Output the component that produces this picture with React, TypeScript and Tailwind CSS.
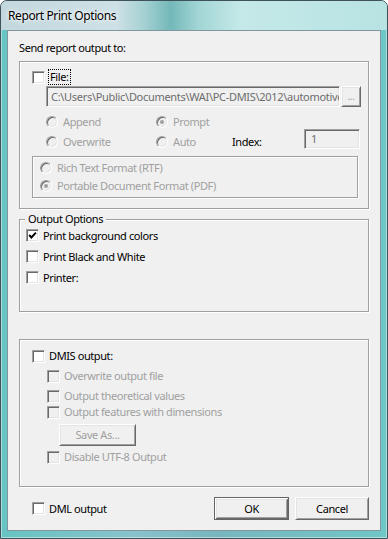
import React from 'react';

type BoxProps = { checked?: boolean; disabled?: boolean };

function CheckBox({ checked = false, disabled = false }: BoxProps) {
  return (
    <div
      className={`flex h-[13px] w-[13px] shrink-0 items-center justify-center border border-t-[#a0a0a0] border-l-[#a0a0a0] border-b-white border-r-white shadow-[inset_1px_1px_0_#696969,inset_-1px_-1px_0_#e3e3e3] ${disabled ? 'bg-[#f0f0f0]' : 'bg-white'}`}
    >
      {checked && (
        <svg width="9" height="9" viewBox="0 0 9 9">
          <path d="M1.2 4 L3.4 6.5 L7.9 1.6" fill="none" stroke="#000" strokeWidth="1.9" />
        </svg>
      )}
    </div>
  );
}

function Radio({ checked = false }: BoxProps) {
  return (
    <div className="flex h-[12px] w-[12px] shrink-0 items-center justify-center rounded-full border border-t-[#a0a0a0] border-l-[#a0a0a0] border-b-white border-r-white bg-[#f0f0f0] shadow-[inset_1px_1px_0_#696969,inset_-1px_-1px_0_#e3e3e3]">
      {checked && <div className="h-[4px] w-[4px] rounded-full bg-[#a0a0a0]" />}
    </div>
  );
}

function Button({ children, disabled = false, isDefault = false, className = '' }: { children: React.ReactNode; disabled?: boolean; isDefault?: boolean; className?: string }) {
  const edge = isDefault
    ? 'border border-[#646464] shadow-[inset_1px_1px_0_#fff,inset_-1px_-1px_0_#696969,inset_2px_2px_0_#e3e3e3,inset_-2px_-2px_0_#a0a0a0]'
    : 'border border-t-white border-l-white border-b-[#696969] border-r-[#696969] shadow-[inset_1px_1px_0_#e3e3e3,inset_-1px_-1px_0_#a0a0a0]';
  return (
    <div className={`flex shrink-0 items-center justify-center bg-[#f0f0f0] ${edge} ${disabled ? 'text-[#a0a0a0]' : 'text-black'} ${className}`}>
      {children}
    </div>
  );
}

const sunken = 'border border-t-[#a0a0a0] border-l-[#a0a0a0] border-b-white border-r-white shadow-[inset_1px_1px_0_#696969,inset_-1px_-1px_0_#e3e3e3]';
const etched = 'border border-[#a0a0a0] shadow-[1px_1px_0_#fff,inset_1px_1px_0_#fff]';

export default function App() {
  return (
    <div className="h-[539px] w-[388px] bg-white font-['Noto_Sans',sans-serif] text-[11px] leading-[16px] tracking-[-0.4px] text-black">
      <div className="flex h-[539px] w-[388px] flex-col overflow-hidden rounded-t-[7px] border border-[#3f5159] bg-[linear-gradient(90deg,#66c4c3_0%,#88c3cb_35%,#78b6c0_55%,#6fc7c6_100%)] shadow-[inset_0_0_0_1px_rgba(255,255,255,0.45)]">
        {/* Title bar */}
        <div className="flex h-[29px] shrink-0 items-center bg-[linear-gradient(90deg,#c3d8de_0%,#cde0e5_30%,#a5d1d3_37%,#74b8b9_44%,#a2d5d5_51%,#c5e8e8_62%,#b8e3e3_100%)] pl-[7px] text-[12px] [text-shadow:0_0_6px_#fff,0_0_3px_#fff]">
          Report Print Options
        </div>

        {/* Client area */}
        <div className="ml-[6px] flex h-[501px] w-[374px] flex-col border border-[#8296a0] bg-[#f0f0f0] px-[11px]">
          <div className="mt-[9px] flex h-[16px] items-center">Send report output to:</div>

          {/* Send report output to */}
          <div className={`mt-[5px] h-[148px] shrink-0 ${etched}`}>
            <div className="mt-[7px] flex h-[16px] items-center pl-[12px]">
              <CheckBox />
              <span className="ml-[3px] border border-dotted border-black px-[1px] leading-[14px]">File:</span>
            </div>
            <div className="mt-[1px] flex h-[21px] pl-[26px]">
              <div className={`flex w-[294px] items-center overflow-hidden whitespace-nowrap bg-[#f0f0f0] pl-[4px] tracking-[-0.3px] text-[#6d6d6d] ${sunken}`}>
                C:\Users\Public\Documents\WAI\PC-DMIS\2012\automotive
              </div>
              <Button disabled className="ml-[1px] w-[20px] pb-[2px] text-[10px]">...</Button>
            </div>
            <div className="mt-[5px] flex h-[20px] items-center pl-[26px] text-[#a0a0a0]">
              <div className="flex w-[110px] items-center">
                <Radio />
                <span className="ml-[5px]">Append</span>
              </div>
              <div className="flex items-center">
                <Radio checked />
                <span className="ml-[5px]">Prompt</span>
              </div>
            </div>
            <div className="flex h-[20px] items-center pl-[26px] text-[#a0a0a0]">
              <div className="flex w-[110px] items-center">
                <Radio />
                <span className="ml-[5px]">Overwrite</span>
              </div>
              <div className="flex w-[76px] items-center">
                <Radio />
                <span className="ml-[5px]">Auto</span>
              </div>
              <span className="w-[72px] text-black">Index:</span>
              <div className={`-mt-[3px] flex h-[20px] w-[56px] items-center self-start bg-[#f0f0f0] pl-[6px] text-[#6d6d6d] ${sunken}`}>1</div>
            </div>
            <div className={`ml-[12px] mt-[4px] h-[42px] w-[326px] pl-[7px] pt-[2px] text-[#a0a0a0] ${etched}`}>
              <div className="flex h-[18px] items-center">
                <Radio />
                <span className="ml-[5px]">Rich Text Format (RTF)</span>
              </div>
              <div className="flex h-[18px] items-center">
                <Radio checked />
                <span className="ml-[5px]">Portable Document Format (PDF)</span>
              </div>
            </div>
          </div>

          {/* Output Options */}
          <fieldset className={`mt-[2px] h-[101px] shrink-0 pl-[5px] ${etched}`}>
            <legend className="h-[16px] bg-[#f0f0f0] px-[3px] leading-[16px]">Output Options</legend>
            <div className="-mt-[2px] ml-[1px] flex h-[21px] items-center">
              <CheckBox checked />
              <span className="ml-[4px]">Print background colors</span>
            </div>
            <div className="ml-[1px] flex h-[21px] items-center">
              <CheckBox />
              <span className="ml-[4px]">Print Black and White</span>
            </div>
            <div className="ml-[1px] flex h-[21px] items-center">
              <CheckBox />
              <span className="ml-[4px]">Printer:</span>
            </div>
          </fieldset>

          {/* DMIS */}
          <div className={`mt-[27px] h-[148px] shrink-0 ${etched}`}>
            <div className="mt-[8px] flex h-[16px] items-center pl-[12px]">
              <CheckBox />
              <span className="ml-[4px]">DMIS output:</span>
            </div>
            <div className="mt-[4px] flex h-[16px] items-center pl-[27px] text-[#a0a0a0]">
              <CheckBox disabled />
              <span className="ml-[4px]">Overwrite output file</span>
            </div>
            <div className="mt-[4px] flex h-[16px] items-center pl-[27px] text-[#a0a0a0]">
              <CheckBox disabled />
              <span className="ml-[4px]">Output theoretical values</span>
            </div>
            <div className="flex h-[16px] items-center pl-[27px] text-[#a0a0a0]">
              <CheckBox disabled />
              <span className="ml-[4px]">Output features with dimensions</span>
            </div>
            <div className="mt-[4px] flex pl-[39px]">
              <Button disabled className="h-[22px] w-[77px]">Save As...</Button>
            </div>
            <div className="mt-[3px] flex h-[16px] items-center pl-[27px] text-[#a0a0a0]">
              <CheckBox disabled />
              <span className="ml-[4px]">Disable UTF-8 Output</span>
            </div>
          </div>

          {/* Bottom row */}
          <div className="mt-[10px] flex h-[23px] items-center">
            <div className="ml-[13px]">
              <CheckBox />
            </div>
            <span className="ml-[4px]">DML output</span>
            <div className="ml-auto flex gap-[6px]">
              <Button isDefault className="h-[23px] w-[75px]">OK</Button>
              <Button className="h-[23px] w-[74px]">Cancel</Button>
            </div>
          </div>
        </div>
      </div>
    </div>
  );
}
